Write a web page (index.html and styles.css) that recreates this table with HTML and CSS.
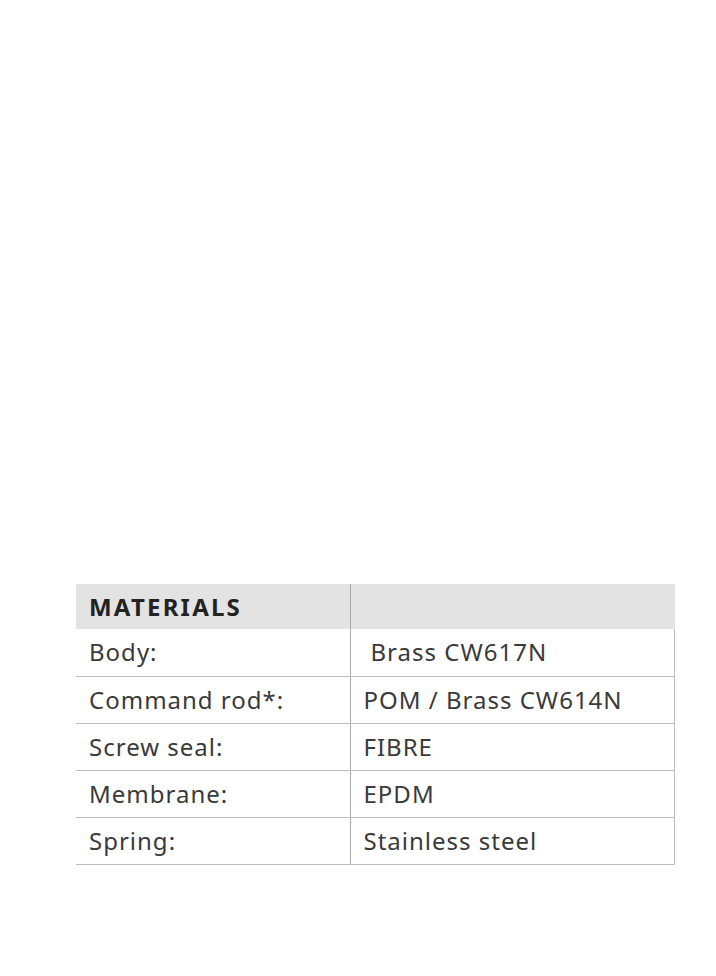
FILE: index.html
```html
<!DOCTYPE html>
<html>
<head>
<meta charset="utf-8">
<link rel="stylesheet" href="styles.css">
</head>
<body>
<div class="page">
  <table class="materials">
    <tr class="head">
      <th class="c1">MATERIALS</th>
      <th class="c2"></th>
    </tr>
    <tr><td class="c1">Body:</td><td class="c2"><span class="indent">Brass CW617N</span></td></tr>
    <tr><td class="c1">Command rod*:</td><td class="c2">POM / Brass CW614N</td></tr>
    <tr><td class="c1">Screw seal:</td><td class="c2">FIBRE</td></tr>
    <tr><td class="c1">Membrane:</td><td class="c2">EPDM</td></tr>
    <tr><td class="c1">Spring:</td><td class="c2">Stainless steel</td></tr>
  </table>
</div>
</body>
</html>
```
FILE: styles.css
```css
html, body {
  margin: 0;
  padding: 0;
  background: #ffffff;
}
.page {
  width: 716px;
  height: 976px;
  padding: 584px 0 0 76px;
  box-sizing: border-box;
}
.materials {
  border-collapse: collapse;
  width: 599px;
  table-layout: fixed;
  font-family: "Noto Sans", "Open Sans", sans-serif;
  font-size: 24px;
  letter-spacing: 1px;
  color: #3a3a3a;
}
.materials th, .materials td {
  padding: 0 0 0 13px;
  text-align: left;
  height: 47px;
  line-height: 28px;
  box-sizing: border-box;
  border-bottom: 1px solid #bdbdbd;
  font-weight: 400;
  white-space: nowrap;
}
.materials .c1 { width: 274px; }
.materials .c2 {
  border-left: 1px solid #a9a9a9;
  border-right: 1px solid #bdbdbd;
}
.materials .head th {
  background: #e3e3e3;
  font-weight: 700;
  height: 45px;
  letter-spacing: 2.2px;
  border-bottom: none;
  color: #222222;
}
.materials .head .c2 { border-right: none; }
.indent { padding-left: 7px; }
```
